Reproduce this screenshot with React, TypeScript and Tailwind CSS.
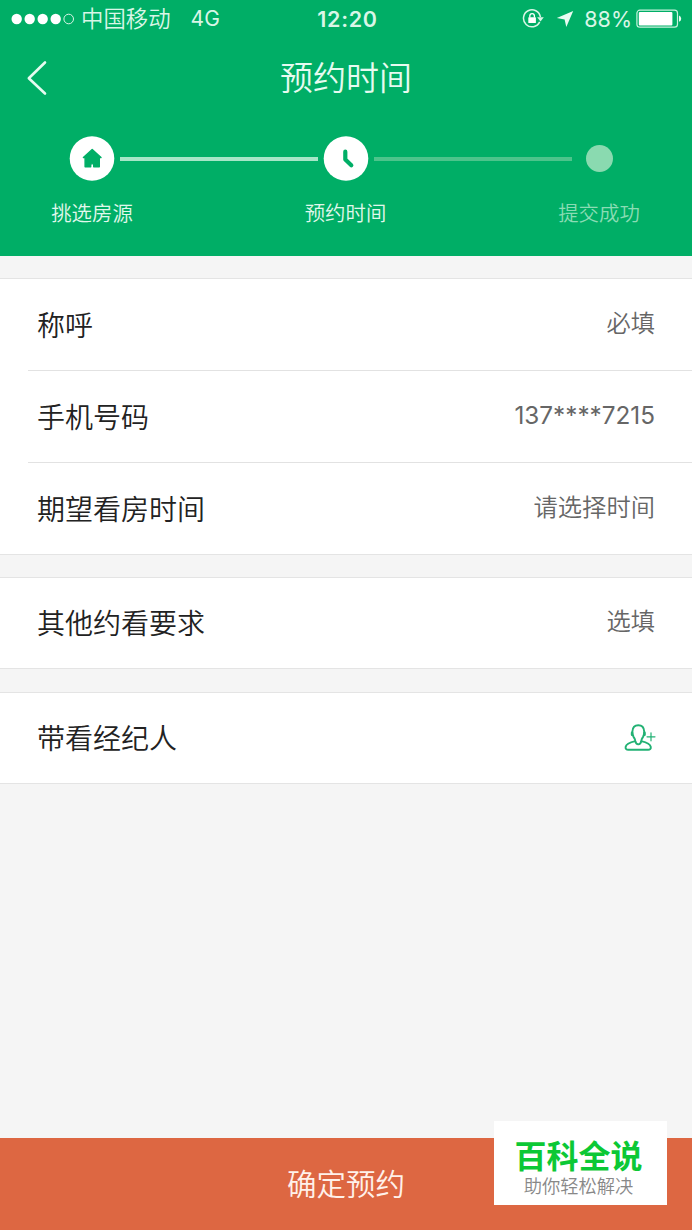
import type { ReactNode } from "react";

function StatusBar() {
  return (
    <div className="grid h-[38px] grid-cols-[1fr_auto_1fr] items-center pr-[10px] pl-[11px] text-[22px] leading-[38px] text-[#d9f6e7]">
      <div className="flex items-center">
        <svg width="64" height="12" viewBox="0 0 64 12" fill="#fff">
          <circle cx="5.7" cy="6" r="5.2" />
          <circle cx="18.7" cy="6" r="5.2" />
          <circle cx="31.7" cy="6" r="5.2" />
          <circle cx="44.7" cy="6" r="5.2" />
          <circle cx="57.7" cy="6" r="4.8" fill="none" stroke="#d9f6e7" strokeWidth="1" />
        </svg>
        <span className="ml-[6px] text-[22.4px] leading-[38px] font-[350]">中国移动</span>
        <span className="ml-[20px] text-[21px]">4G</span>
      </div>
      <div className="pl-[2px] text-[21.5px] font-semibold tracking-[0.7px]">12:20</div>
      <div className="flex items-center justify-end">
        <svg width="22" height="22" viewBox="0 0 22 22" fill="none">
          <path d="M17.7 13.9A8.5 8.5 0 1 1 18.4 9" stroke="#d9f6e7" strokeWidth="1.5" />
          <path d="M15.2 9.3h6.6l-3.3 4.2z" fill="#d9f6e7" />
          <rect x="6.3" y="9.2" width="7.6" height="5.8" rx=".6" fill="#fff" />
          <path d="M7.8 9.5V8a2.3 2.3 0 0 1 4.6 0v1.5" stroke="#fff" strokeWidth="1.3" />
        </svg>
        <svg className="ml-[12px]" width="18" height="18" viewBox="0 0 18 18">
          <path d="M17.2 1 10.3 17 8.6 9.5.8 8z" fill="#e8fbf1" />
        </svg>
        <span className="ml-[10px] text-[21.5px]">88%</span>
        <svg className="ml-[4px]" width="46" height="20" viewBox="0 0 46 20">
          <rect x=".9" y="1.2" width="40.6" height="17" rx="3" fill="none" stroke="#c8f1dd" strokeWidth="1.2" />
          <rect x="2.8" y="3" width="33.6" height="13.4" rx="1" fill="#fff" />
          <path d="M43 6.6q2.2.8 2.2 3.1T43 12.8z" fill="#e8fbf1" />
        </svg>
      </div>
    </div>
  );
}

function NavBar() {
  return (
    <div className="grid h-[80px] grid-cols-[80px_1fr_80px] items-center">
      <button className="pl-[26px]" aria-label="返回">
        <svg width="22" height="36" viewBox="0 0 22 36" fill="none" stroke="#e6fbf0" strokeWidth="2.6" strokeLinecap="round" strokeLinejoin="round">
          <path d="M19 2.5 2.8 18.2 19 33.5" />
        </svg>
      </button>
      <h1 className="text-center text-[33px] leading-[48px] font-[350] text-[#e6fbf0]">预约时间</h1>
    </div>
  );
}

function StepLabel({ children, dim }: { children: ReactNode; dim?: boolean }) {
  return (
    <span className={`w-[100px] text-center text-[20.4px] leading-[30px] font-[350] ${dim ? "text-[#8adcb4]" : "text-[#e0f8ec]"}`}>
      {children}
    </span>
  );
}

function Steps() {
  return (
    <div className="h-[138px] pt-[18px]">
      <div className="flex h-[46px] items-center pl-[69px]">
        <svg width="46" height="46" viewBox="0 0 46 46">
          <circle cx="23" cy="22.5" r="22.3" fill="#fff" />
          <path
            d="M23.2 13.4 32 21.5h-1.7v9.200h-5.600v-1.600a1.500 1.500 0 0 0-3 0v1.600h-5.600v-9.200h-1.700z"
            fill="#00ae66"
            stroke="#00ae66"
            strokeWidth="1.4"
            strokeLinejoin="round"
          />
        </svg>
        <div className="ml-[5px] h-[4px] w-[198px] bg-[#a6e6c7]" />
        <svg className="ml-[5px]" width="46" height="46" viewBox="0 0 46 46" fill="none">
          <circle cx="23" cy="22.5" r="22.3" fill="#fff" />
          <path d="M22.300 15.700v7.800l6 5.700" stroke="#00ae66" strokeWidth="4.2" strokeLinecap="round" strokeLinejoin="round" />
        </svg>
        <div className="ml-[5px] h-[4px] w-[198px] bg-[#4cc48b]" />
        <div className="mb-[1px] ml-[14px] size-[27px] rounded-full bg-[#8adab0]" />
      </div>
      <div className="mt-[17px] flex justify-between pr-[43px] pl-[42px]">
        <StepLabel>挑选房源</StepLabel>
        <StepLabel>预约时间</StepLabel>
        <StepLabel dim>提交成功</StepLabel>
      </div>
    </div>
  );
}

type RowSize = "divided" | "last" | "single";

const rowSizes: Record<RowSize, string> = {
  divided: "h-[92px] border-b border-[#e2e2e2]",
  last: "h-[91px]",
  single: "h-[90px]",
};

function Row({ label, children, size = "divided" }: { label: string; children: ReactNode; size?: RowSize }) {
  return (
    <div className={`ml-[28px] flex items-center justify-between pr-[36px] pl-[9px] ${rowSizes[size]}`}>
      <span className="pt-[2px] text-[28px] leading-[40px] font-[350] text-[#222222]">{label}</span>
      <span className="-mt-[4px] mr-[1px] text-[24.3px] leading-[36px] font-[350] text-[#666666]">{children}</span>
    </div>
  );
}

function Group({ children }: { children: ReactNode }) {
  return <section className="border-y border-[#e4e4e4] bg-white">{children}</section>;
}

function AddPersonIcon() {
  return (
    <svg className="relative top-[2px] left-[1px]" width="32" height="30" viewBox="0 0 32 30" fill="none" stroke="#22b174" strokeWidth="1.9" strokeLinejoin="round" strokeLinecap="round">
      <path d="M11.300 18.200c.3-1.500-.8-2.700-1.700-4.200C8.700 12.300 8.300 10.500 8.400 8.500c.2-3.900 2.400-6.300 5.900-6.300s5.700 2.400 5.900 6.300c.1 2-.3 3.800-1.200 5.500-.9 1.500-2 2.700-1.700 4.200-.4 1.700-1.400 3-3 3.200-1.600-.2-2.600-1.500-3-3.200Z" />
      <path d="M11.300 18.200c-5 1.200-9.200 3-9.700 5.800-.2 1.900.9 2.800 2.600 2.800H24.200c1.700 0 2.800-.9 2.600-2.800-.5-2.800-4.500-4.600-9.500-5.800" />
      <path d="M8 9.800v2M20.600 9.800v2" strokeWidth="2.4" />
      <path d="M23 13.800h8M27 9.800v8" strokeWidth="1.2" />
    </svg>
  );
}

export default function App() {
  return (
    <div className="relative flex h-[1230px] w-[692px] flex-col overflow-hidden bg-[#f5f5f5] font-['Inter','Noto_Sans_CJK_SC',sans-serif]">
      <header className="h-[256px] bg-[#00ae66]">
        <StatusBar />
        <NavBar />
        <Steps />
      </header>
      <main className="flex flex-1 flex-col pt-[22px]">
        <Group>
          <Row label="称呼">必填</Row>
          <Row label="手机号码">
            <span className="font-normal">137****7215</span>
          </Row>
          <Row label="期望看房时间" size="last">请选择时间</Row>
        </Group>
        <div className="h-[22px]" />
        <Group>
          <Row label="其他约看要求" size="single">选填</Row>
        </Group>
        <div className="h-[23px]" />
        <Group>
          <Row label="带看经纪人" size="single"><AddPersonIcon /></Row>
        </Group>
      </main>
      <button className="h-[92px] w-full bg-[#dd6742] text-[29.5px] font-[350] text-[#fff1ea]">确定预约</button>
      <aside className="absolute top-[1121px] left-[494px] flex h-[84px] w-[173px] flex-col items-center bg-white pt-[15px] pr-[4px]">
        <strong className="text-[32px] leading-[42px] font-bold text-[#0cc835]">百科全说</strong>
        <span className="-mt-[2px] text-[18.3px] leading-[20px] font-[350] text-[#888888]">助你轻松解决</span>
      </aside>
    </div>
  );
}
